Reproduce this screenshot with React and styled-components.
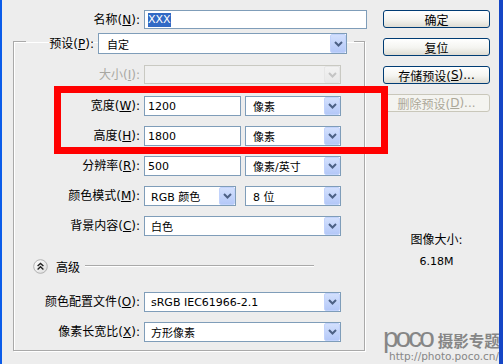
import React from 'react';
import styled, { createGlobalStyle } from 'styled-components';

const Global = createGlobalStyle`
  html, body { margin: 0; padding: 0; background: #ededed; }
  body {
    font-family: "DejaVu Sans", "Noto Sans CJK SC", sans-serif;
    font-size: 12px;
    color: #000;
  }
`;

const Window = styled.div`
  position: relative;
  width: 503px;
  height: 364px;
  box-sizing: border-box;
  background: #ededed;
  border-left: 2px solid #0b5ce9;
  border-right: 4px solid #1546c5;
  display: flex;
  overflow: hidden;
`;

const FormColumn = styled.div`
  width: 365px;
  flex-shrink: 0;
  box-sizing: border-box;
  padding: 10px 0 0 11px;
  display: flex;
  flex-direction: column;
`;

const Row = styled.div`
  display: flex;
  align-items: center;
  gap: ${p => p.$gap ?? 4}px;
  height: ${p => p.$h ?? 20}px;
  margin-top: ${p => p.$mt ?? 0}px;
`;

const Label = styled.div`
  width: ${p => p.$w}px;
  flex-shrink: 0;
  text-align: right;
  white-space: nowrap;
  line-height: 16px;
  color: ${p => (p.$disabled ? '#a9a8a2' : '#000')};
`;

const Key = styled.span`
  text-decoration: underline;
  text-underline-offset: 1px;
`;

const TextField = styled.div`
  box-sizing: border-box;
  width: ${p => p.$w}px;
  height: 100%;
  border: 1px solid #7f9db9;
  background: #fff;
  padding-left: 3px;
  display: flex;
  align-items: center;
  font-size: 11px;
  white-space: nowrap;
  overflow: hidden;
`;

const Selected = styled.span`
  background: #316ac5;
  color: #fff;
  line-height: 14px;
`;

const Select = styled.div`
  box-sizing: border-box;
  width: ${p => p.$w}px;
  height: 100%;
  border: 1px solid ${p => (p.$disabled ? '#c9c9c2' : '#7f9db9')};
  background: ${p => (p.$disabled ? '#f0f0f0' : '#fff')};
  display: flex;
  font-size: 11px;
  white-space: nowrap;
  margin-left: ${p => p.$ml ?? 0}px;
`;

const SelectValue = styled.div`
  flex: 1;
  display: flex;
  align-items: center;
  padding-left: ${p => p.$pl ?? 6}px;
  overflow: hidden;
`;

const ArrowBtn = styled.div`
  width: 16px;
  flex-shrink: 0;
  box-sizing: border-box;
  border-radius: 2px;
  border: 1px solid ${p => (p.$disabled ? '#e6e6e6' : '#c2d3fc')};
  background: ${p =>
    p.$disabled
      ? 'linear-gradient(#f2f2f2, #e8e8e8)'
      : 'linear-gradient(#d3e0fd, #b4c8f8)'};
  display: flex;
  align-items: center;
  justify-content: center;
`;

const Group = styled.fieldset`
  margin: 0;
  width: 352px;
  box-sizing: border-box;
  border: 1px solid #a9a9a9;
  box-shadow: 1px 1px 0 #fff, inset 1px 1px 0 #fff;
  padding: 0 0 8px 0;
  min-inline-size: auto;
`;

const GroupLegend = styled.legend`
  margin-left: 12px;
  padding: 4px 7px 0 0;
`;

const LegendRow = styled.div`
  display: flex;
  align-items: center;
  gap: 4px;
  height: 21px;
`;

const AdvRow = styled.div`
  display: flex;
  align-items: center;
  height: 20px;
  margin-top: 20px;
  padding-left: 19px;
  gap: 8px;
`;

const Rule = styled.div`
  flex: 1;
  margin: 0 50px 0 -3px;
  border-top: 1px solid #a9a9a9;
  border-bottom: 1px solid #fff;
`;

const SideColumn = styled.div`
  flex: 1;
  padding: 10px 0 0 16px;
  display: flex;
  flex-direction: column;
`;

const Button = styled.div`
  width: 107px;
  height: 18px;
  box-sizing: border-box;
  border: 1px solid ${p => (p.$disabled ? '#c9c7ba' : '#003c74')};
  border-radius: 3px;
  background: ${p =>
    p.$disabled ? '#f4f4f0' : 'linear-gradient(#ffffff, #f4f4f0 55%, #dedcd3)'};
  color: ${p => (p.$disabled ? '#aca899' : '#000')};
  display: flex;
  align-items: center;
  justify-content: center;
  white-space: nowrap;
  margin-top: ${p => p.$mt ?? 0}px;
`;

const Info = styled.div`
  width: 107px;
  text-align: center;
  line-height: 16px;
  margin-top: ${p => p.$mt}px;
  font-size: ${p => p.$fs ?? 12}px;
`;

const Annotation = styled.div`
  position: absolute;
  left: 52px;
  top: 86px;
  width: 334px;
  height: 68px;
  box-sizing: border-box;
  border: 7px solid #ff0000;
  pointer-events: none;
`;

const Watermark = styled.div`
  position: absolute;
  left: 381px;
  top: 325px;
  color: #868686;
  display: flex;
  flex-direction: column;
  white-space: nowrap;
  pointer-events: none;
`;

const MarkTop = styled.div`
  display: flex;
  align-items: baseline;
  height: 25px;
`;

const Poco = styled.span`
  font-family: "Liberation Sans", sans-serif;
  font-size: 28px;
  letter-spacing: -3px;
  line-height: 25px;
`;

const MarkCn = styled.span`
  font-family: "Noto Sans CJK SC", sans-serif;
  font-weight: 700;
  font-size: 15.5px;
  margin-left: 6px;
  line-height: 25px;
`;

const MarkUrl = styled.span`
  font-family: "DejaVu Sans", sans-serif;
  font-size: 10.5px;
  line-height: 10px;
  margin-left: 6px;
  margin-top: 1px;
`;

const Chevron = ({ disabled }) => (
  <svg width="9" height="6" viewBox="0 0 9 6">
    <path
      d="M1 1 L4.5 4.5 L8 1"
      fill="none"
      stroke={disabled ? '#c4c4c4' : '#4d6185'}
      strokeWidth="2"
    />
  </svg>
);

const Dropdown = ({ w, value, disabled, pl, ml }) => (
  <Select $w={w} $disabled={disabled} $ml={ml}>
    <SelectValue $pl={pl}>{value}</SelectValue>
    <ArrowBtn $disabled={disabled}>
      <Chevron disabled={disabled} />
    </ArrowBtn>
  </Select>
);

const CollapseIcon = () => (
  <svg width="15" height="15" viewBox="0 0 15 15">
    <defs>
      <linearGradient id="cg" x1="0" y1="0" x2="1" y2="1">
        <stop offset="0" stopColor="#ffffff" />
        <stop offset="1" stopColor="#dcdcdc" />
      </linearGradient>
    </defs>
    <circle cx="7.5" cy="7.5" r="6.8" fill="url(#cg)" stroke="#b0b0b0" />
    <path d="M4.6 7 L7.5 4.4 L10.4 7" fill="none" stroke="#222" strokeWidth="1.4" />
    <path d="M4.6 10.4 L7.5 7.8 L10.4 10.4" fill="none" stroke="#222" strokeWidth="1.4" />
  </svg>
);

const L = ({ w, cn, k, disabled, tail = ':' }) => (
  <Label $w={w} $disabled={disabled}>
    {cn}(<Key>{k}</Key>){tail}
  </Label>
);

export default function App() {
  return (
    <>
      <Global />
      <Window>
        <FormColumn>
          <Row $h={19}>
            <L w={127} cn="名称" k="N" />
            <TextField $w={223}>
              <Selected>XXX</Selected>
            </TextField>
          </Row>

          <Group>
            <GroupLegend>
              <LegendRow>
                <L w={68} cn="预设" k="P" />
                <Dropdown w={249} value="自定" pl={8} />
              </LegendRow>
            </GroupLegend>

            <Row $mt={11} $h={19}>
              <L w={126} cn="大小" k="I" disabled />
              <Dropdown w={197} value="" disabled />
            </Row>
            <Row $mt={12}>
              <L w={126} cn="宽度" k="W" />
              <TextField $w={97}>1200</TextField>
              <Dropdown w={96} value="像素" pl={7} />
            </Row>
            <Row $mt={10}>
              <L w={126} cn="高度" k="H" />
              <TextField $w={97}>1800</TextField>
              <Dropdown w={96} value="像素" pl={7} />
            </Row>
            <Row $mt={10}>
              <L w={126} cn="分辨率" k="R" />
              <TextField $w={97}>500</TextField>
              <Dropdown w={96} value="像素/英寸" pl={7} />
            </Row>
            <Row $mt={10}>
              <L w={126} cn="颜色模式" k="M" />
              <Dropdown w={92} value="RGB 颜色" />
              <Dropdown w={96} value="8 位" pl={7} ml={5} />
            </Row>
            <Row $mt={10}>
              <L w={126} cn="背景内容" k="C" />
              <Dropdown w={197} value="白色" />
            </Row>

            <AdvRow>
              <CollapseIcon />
              <span>高级</span>
              <Rule />
            </AdvRow>

            <Row $mt={16}>
              <L w={126} cn="颜色配置文件" k="O" />
              <Dropdown w={197} value="sRGB IEC61966-2.1" />
            </Row>
            <Row $mt={10}>
              <L w={126} cn="像素长宽比" k="X" />
              <Dropdown w={197} value="方形像素" />
            </Row>
          </Group>
        </FormColumn>

        <SideColumn>
          <Button>确定</Button>
          <Button $mt={10}>复位</Button>
          <Button $mt={10}>
            存储预设(<Key>S</Key>)...
          </Button>
          <Button $mt={10} $disabled>
            删除预设(<Key>D</Key>)...
          </Button>
          <Info $mt={120}>图像大小:</Info>
          <Info $mt={6} $fs={11}>6.18M</Info>
        </SideColumn>

        <Annotation />
        <Watermark>
          <MarkTop>
            <Poco>poco</Poco>
            <MarkCn>摄影专题</MarkCn>
          </MarkTop>
          <MarkUrl>http://photo.poco.cn/</MarkUrl>
        </Watermark>
      </Window>
    </>
  );
}
